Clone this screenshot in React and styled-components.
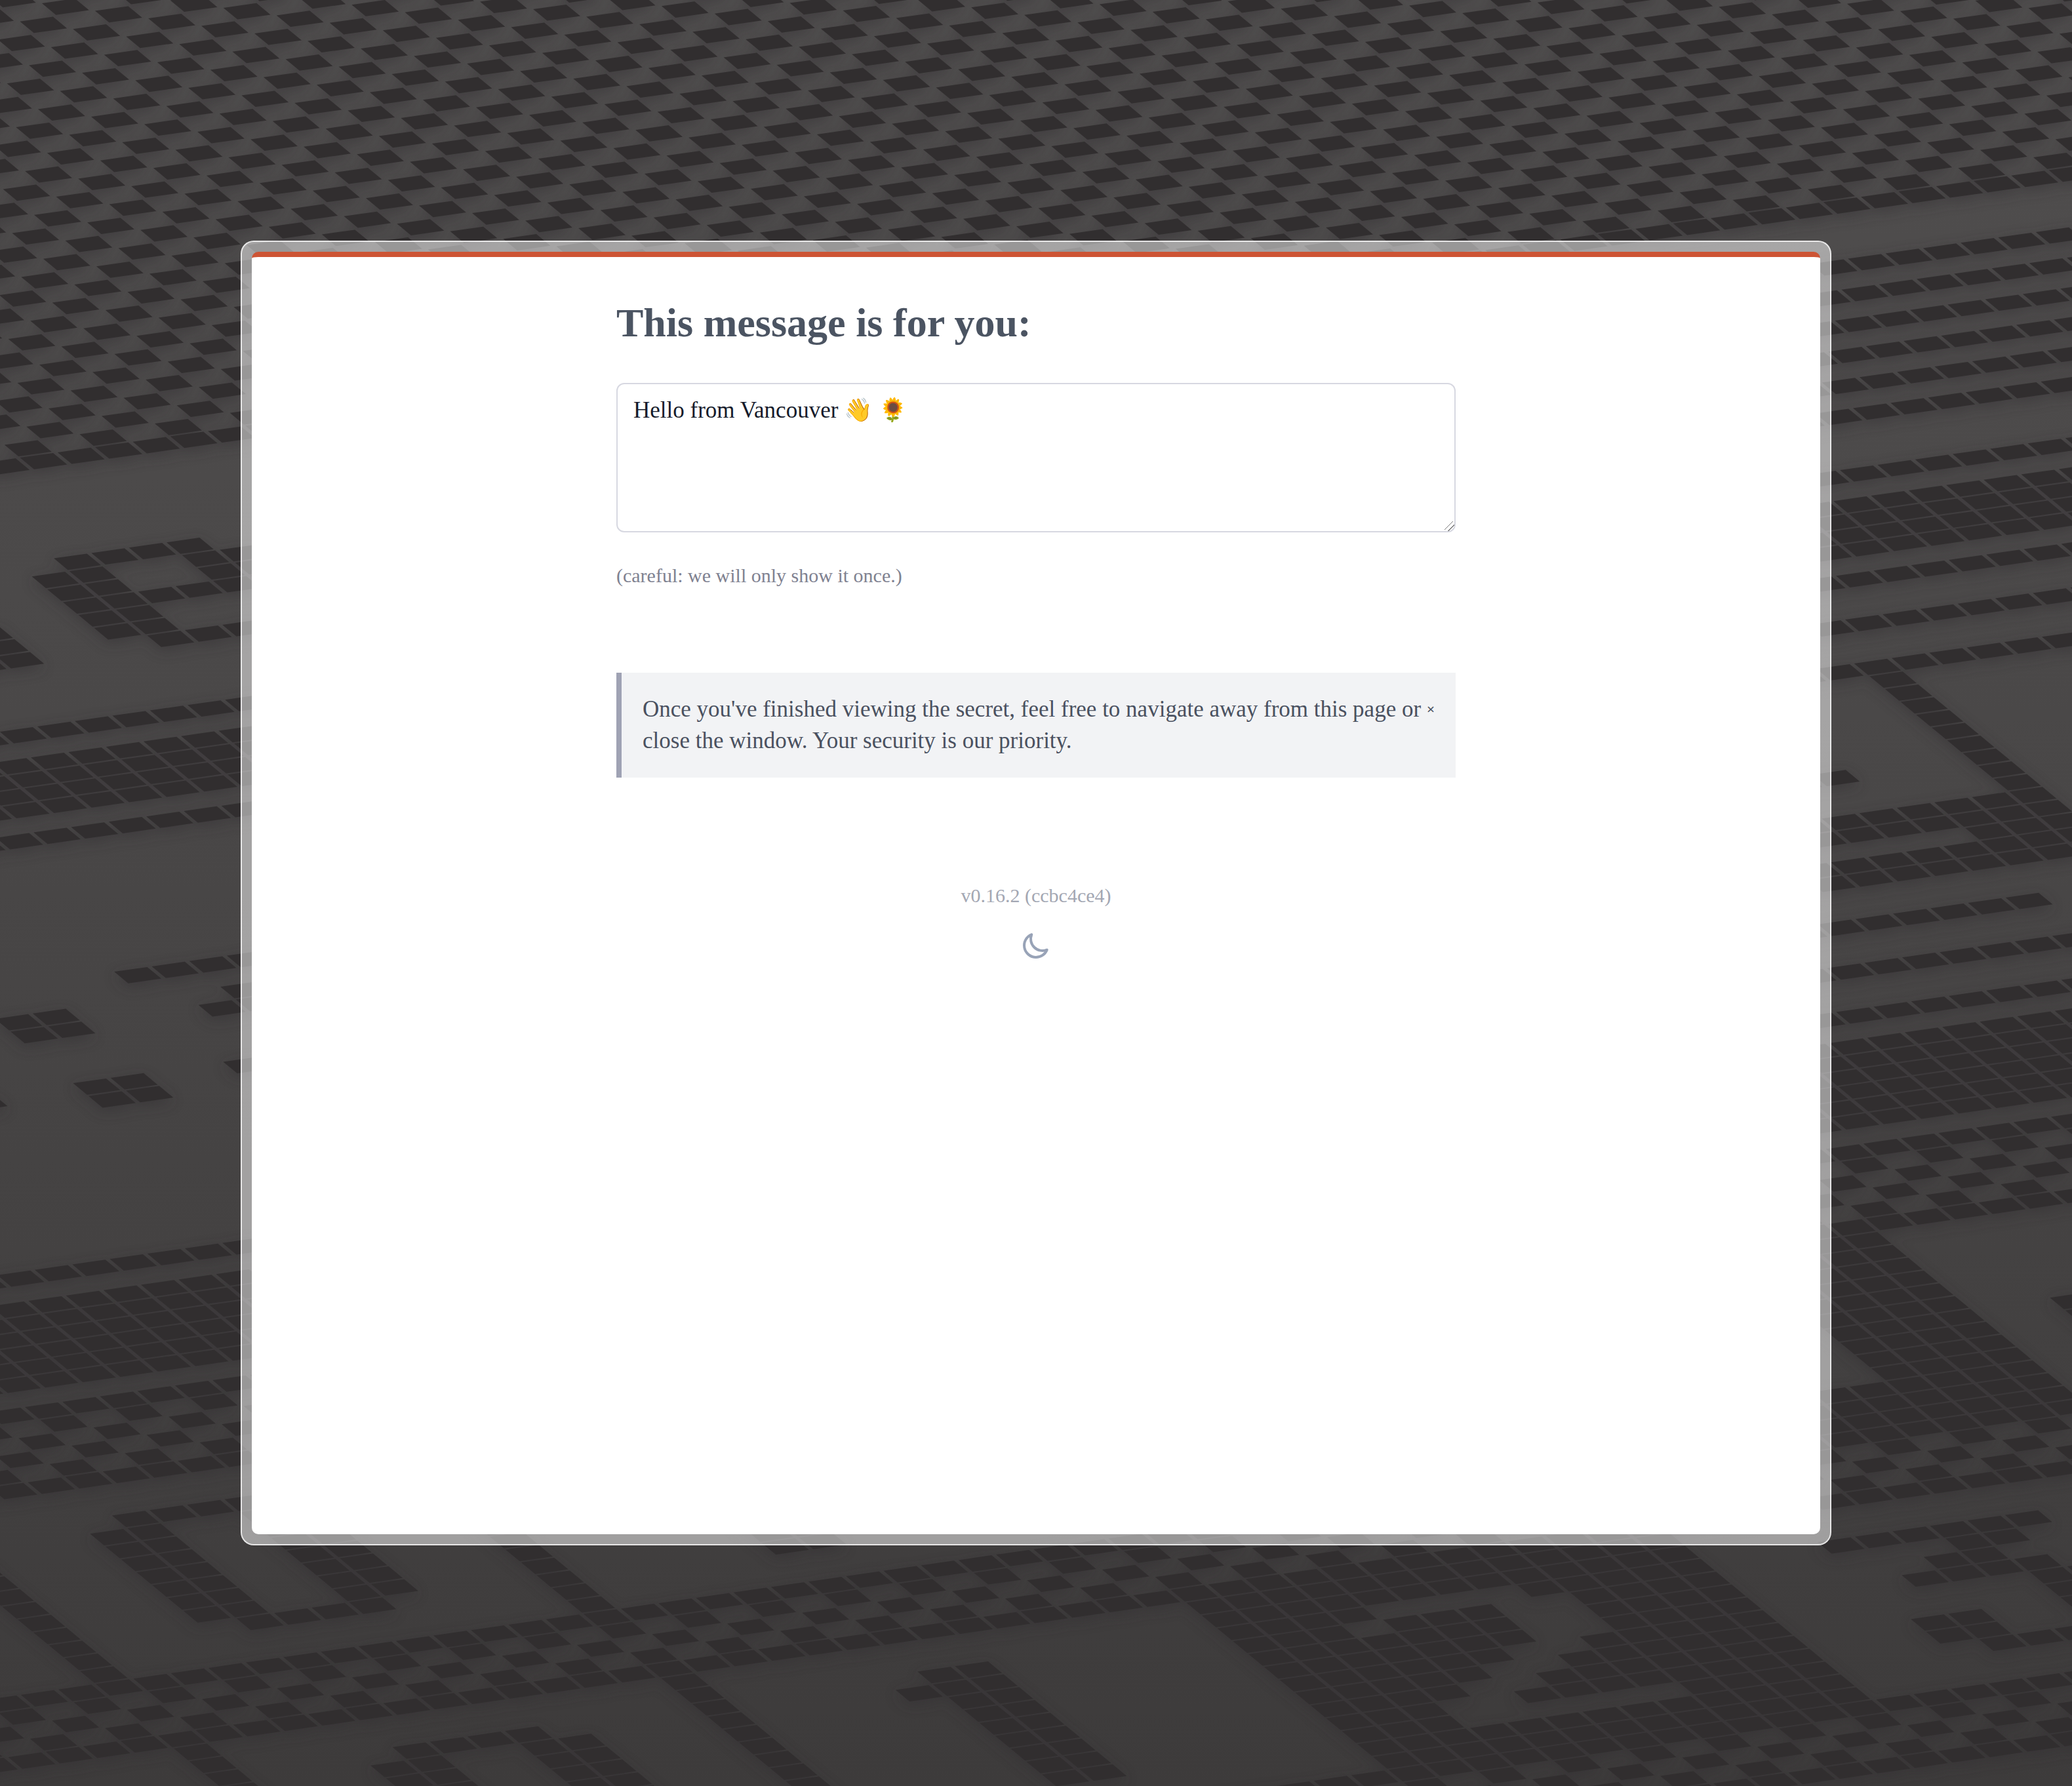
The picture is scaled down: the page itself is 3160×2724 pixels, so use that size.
import React, { useState } from "react";
import styled, { createGlobalStyle } from "styled-components";

const GlobalStyle = createGlobalStyle`
  *, *::before, *::after { box-sizing: border-box; }
  body { margin: 0; background: #454343; }
`;

const serif = `"Liberation Serif", Georgia, serif`;

const Page = styled.div`
  position: relative;
  isolation: isolate;
  display: grid;
  min-height: 100vh;
  padding: 367px;
  font-family: ${serif};
`;

const Backdrop = styled.svg`
  position: absolute;
  inset: 0;
  z-index: -1;
  width: 100%;
  height: 100%;
`;

const Frame = styled.div`
  display: grid;
  padding: 15px;
  border: 2px solid rgba(255, 255, 255, 0.75);
  border-radius: 20px;
  background: rgba(255, 255, 255, 0.5);
`;

const Panel = styled.main`
  padding: 64px 32px;
  border-top: 8px solid #cd5434;
  border-radius: 10px;
  background: #fff;
`;

const Column = styled.div`
  display: flex;
  flex-direction: column;
  max-width: 1280px;
  margin: 0 auto;
`;

const Title = styled.h1`
  margin: 0 0 56px;
  color: #4b5462;
  font-size: 62px;
  font-weight: 700;
  line-height: 72px;
`;

const Secret = styled.textarea`
  display: block;
  width: 100%;
  height: 228px;
  padding: 16px 24px;
  border: 2px solid #d7d8e1;
  border-radius: 12px;
  background: #fff;
  color: #161b2b;
  font-family: ${serif};
  font-size: 35px;
  line-height: 48px;
  resize: vertical;

  &::-webkit-resizer {
    background: linear-gradient(
      135deg,
      transparent 41%, #7d7d7d 41% 46%,
      transparent 46% 66%, #7d7d7d 66% 71%,
      transparent 71%
    );
  }
`;

const Hint = styled.p`
  margin: 46px 0 128px;
  color: #7f8291;
  font-size: 30px;
  line-height: 40px;
`;

const Notice = styled.div`
  display: flex;
  align-items: flex-start;
  padding: 32px 28px 32px 32px;
  border-left: 8px solid #9fa2b4;
  background: #f2f3f5;
  color: #4a5160;
`;

const NoticeText = styled.p`
  flex: 1;
  margin: 0;
  font-size: 35px;
  line-height: 48px;
`;

const Close = styled.button`
  width: 20px;
  padding: 0;
  border: 0;
  background: none;
  color: inherit;
  font-family: ${serif};
  font-size: 22px;
  font-weight: 700;
  line-height: 48px;
  cursor: pointer;
`;

const Footer = styled.footer`
  display: flex;
  flex-direction: column;
  align-items: center;
  gap: 32px;
  margin-top: 160px;
  color: #a3a7b3;
  font-size: 30px;
  line-height: 40px;
`;

const ThemeToggle = styled.button`
  display: flex;
  padding: 0;
  border: 0;
  background: none;
  color: #98a3b7;
  cursor: pointer;
`;

/* Desktop pixel art, drawn on a skewed lattice of tiles. */
const ORIGIN = [203.5, 2560.3];
const ACROSS = [57.2, -8.225];
const DOWN = [23.77, 19.64];
const BEND = [-0.0012, -0.00128];

const point = (i, j) =>
  [0, 1].map((k) => (ORIGIN[k] + i * ACROSS[k] + j * DOWN[k] + i * j * BEND[k]).toFixed(1)).join(" ");

const between = (n, lo, hi) => n >= lo && n <= hi;

/* Glyph rows, top to bottom; each entry lists inclusive column runs. */
const ZERO = [[[4, 7]], [[3, 4], [7, 8]], [[3, 4], [7, 8]], [[3, 4], [7, 8]], [[3, 4], [7, 8]], [[3, 4], [7, 8]], [[3, 4], [7, 8]], [[3, 4], [7, 8]], [[4, 7]]];
const ONE = [[[18, 19]], [[17, 19]], [[18, 19]], [[18, 19]], [[18, 19]], [[18, 19]], [[18, 19]], [[18, 19]], [[18, 19]]];
const TWO = [[[30, 33]], [[29, 29], [33, 34]], [[33, 34]], [[33, 34]], [[32, 33]], [[31, 32]], [[30, 31]], [[29, 30]], [[29, 34]]];
const THREE = [[[42, 47]], [[45, 46]], [[44, 45]], [[43, 46]], [[46, 47]], [[46, 47]], [[42, 43], [46, 47]], [[42, 43], [46, 47]], [[43, 46]]];
const LETTER_E = [[[29, 32]], [[28, 29], [32, 33]], [[28, 29], [32, 33]], [[28, 33]], [[28, 29]], [[28, 29]], [[29, 32]]];

const inGlyph = (glyph, top, i, j) => (glyph[j - top] || []).some(([lo, hi]) => between(i, lo, hi));

const SPOTS = new Set([
  "19,-47", "20,-47", "21,-47", "22,-47", "23,-47", "21,-45", "20,-44", "21,-44", "19,-40", "20,-40",
  "15,-45", "16,-45", "15,-44", "16,-44", "15,-40", "16,-40", "15,-39", "16,-39", "12,-40",
  "25,-71", "25,-70", "24,-70", "25,-69", "24,-69", "54,-7", "55,-7", "54,-6", "55,-6",
]);

function isDark(i, j) {
  if (j < -82) return (i + j) % 2 === 0;
  if ([-82, -64, -57, -28, -19, -14, 0, 4, 18, 22].includes(j)) return true;
  if (between(j, -62, -59) || between(j, -26, -21)) return true;
  if (between(j, -18, -15) || between(j, 1, 3) || between(j, 19, 21)) return (i + j) % 2 !== 0;
  if (SPOTS.has(`${i},${j}`)) return true;
  if (between(j, -78, -68)) return (i >= 50 && j % 2 === 0) || inGlyph(LETTER_E, -75, i, j);
  if (between(j, -56, -29)) {
    if (i < 45) return false;
    if ([-54, -51, -31].includes(j)) return true;
    if (i === 67 && between(j, -50, -37)) return true;
    if ([-41, -40, -38, -37].includes(j)) return i <= 67;
    if (j === -39) return between(i, 65, 67);
    if (j === -34) return i <= 64;
    return j === -44 && i <= 63;
  }
  if (between(j, -13, -1)) {
    if (i === -1 || i === 12) return true;
    if (between(i, 39, 51)) return !(between(j, -7, -4) && i <= 47);
    return inGlyph(ZERO, -11, i, j) || inGlyph(ONE, -11, i, j);
  }
  if (between(j, 5, 17)) {
    if (i === -1 || i === 12) return true;
    if (between(i, 26, 38)) return !inGlyph(TWO, 7, i, j);
    return inGlyph(ZERO, 7, i, j) || inGlyph(ONE, 7, i, j) || inGlyph(THREE, 7, i, j);
  }
  return false;
}

const TILE_W = 0.88;
const TILE_H = 0.9;

function buildTiles() {
  let d = "";
  for (let j = -116; j <= 28; j += 1) {
    for (let i = -10; i <= 96; i += 1) {
      const x = ORIGIN[0] + i * ACROSS[0] + j * DOWN[0];
      const y = ORIGIN[1] + i * ACROSS[1] + j * DOWN[1];
      if (x < -90 || x > 3180 || y < -40 || y > 2750 || !isDark(i, j)) continue;
      d += `M${point(i, j)}L${point(i + TILE_W, j)}L${point(i + TILE_W, j + TILE_H)}L${point(i, j + TILE_H)}Z`;
    }
  }
  return d;
}

const TILES = buildTiles();

function Desktop() {
  return (
    <Backdrop viewBox="0 0 3160 2724" preserveAspectRatio="xMidYMid slice" aria-hidden="true">
      <defs>
        <linearGradient id="desk" x1="0" y1="0" x2="0" y2="1">
          <stop offset="0" stopColor="#504e4e" />
          <stop offset="0.4" stopColor="#4a4848" />
          <stop offset="0.7" stopColor="#444242" />
          <stop offset="1" stopColor="#3d3b3b" />
        </linearGradient>
        <filter id="soften" filterUnits="userSpaceOnUse" x="-100" y="-100" width="3360" height="2924">
          <feGaussianBlur stdDeviation="10" />
        </filter>
      </defs>
      <rect width="3160" height="2724" fill="url(#desk)" />
      <path d={TILES} fill="#322f30" opacity="0.55" transform="translate(0 6)" filter="url(#soften)" />
      <path d={TILES} fill="#312e2f" />
    </Backdrop>
  );
}

function Moon() {
  return (
    <svg width="48" height="48" viewBox="0 0 24 24" fill="none" stroke="currentColor" strokeWidth="2" strokeLinecap="round" strokeLinejoin="round" aria-hidden="true">
      <path d="M20.354 15.354A9 9 0 018.646 3.646 9.003 9.003 0 0012 21a9.003 9.003 0 008.354-5.646z" />
    </svg>
  );
}

export default function App() {
  const [open, setOpen] = useState(true);
  return (
    <>
      <GlobalStyle />
      <Page>
        <Desktop />
        <Frame>
          <Panel>
            <Column>
              <Title id="message-title">This message is for you:</Title>
              <Secret aria-labelledby="message-title" readOnly value="Hello from Vancouver 👋 🌻" />
              <Hint>(careful: we will only show it once.)</Hint>
              {open && (
                <Notice role="status">
                  <NoticeText>
                    Once you've finished viewing the secret, feel free to navigate away from this page or
                    close the window. Your security is our priority.
                  </NoticeText>
                  <Close type="button" aria-label="Dismiss" onClick={() => setOpen(false)}>×</Close>
                </Notice>
              )}
              <Footer>
                <span>v0.16.2 (ccbc4ce4)</span>
                <ThemeToggle type="button" aria-label="Toggle dark mode"><Moon /></ThemeToggle>
              </Footer>
            </Column>
          </Panel>
        </Frame>
      </Page>
    </>
  );
}
